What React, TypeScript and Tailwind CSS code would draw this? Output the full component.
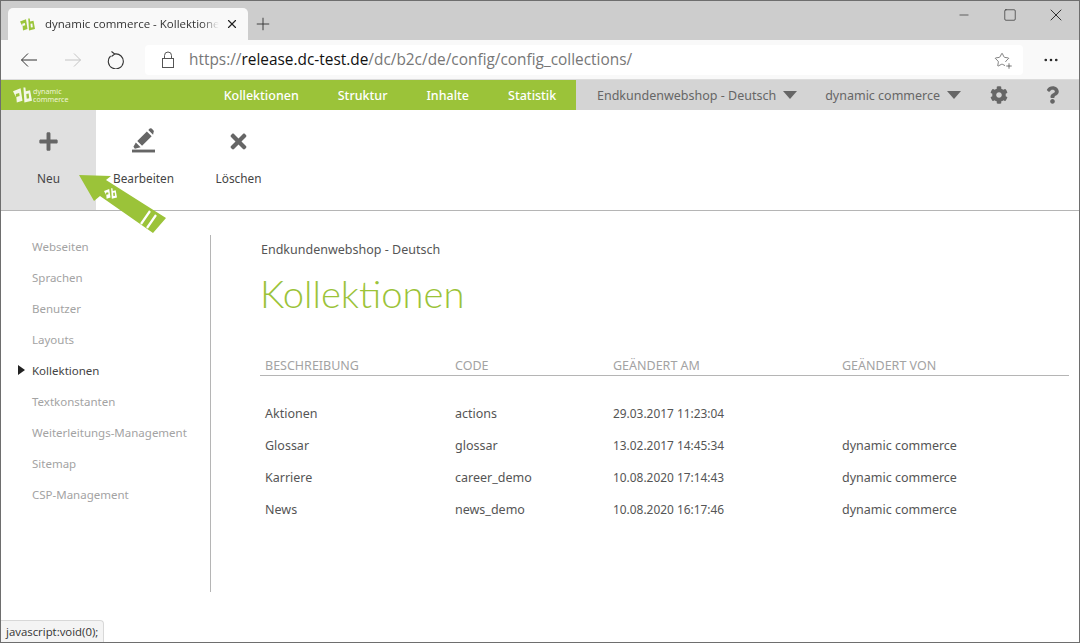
import { Star, Plus, X, Minus, Square, MoreHorizontal } from 'lucide-react';
import { FaPlus, FaTimes, FaCog, FaQuestion } from 'react-icons/fa';

const sidebarItems = [
  'Webseiten',
  'Sprachen',
  'Benutzer',
  'Layouts',
  'Kollektionen',
  'Textkonstanten',
  'Weiterleitungs-Management',
  'Sitemap',
  'CSP-Management',
];

const rows = [
  { name: 'Aktionen', code: 'actions', date: '29.03.2017 11:23:04', by: '' },
  { name: 'Glossar', code: 'glossar', date: '13.02.2017 14:45:34', by: 'dynamic commerce' },
  { name: 'Karriere', code: 'career_demo', date: '10.08.2020 17:14:43', by: 'dynamic commerce' },
  { name: 'News', code: 'news_demo', date: '10.08.2020 16:17:46', by: 'dynamic commerce' },
];

function DcLogo({ className, fill }: { className: string; fill: string }) {
  return (
    <svg viewBox="0 0 20 18" className={className}>
      <path d="M0 5 L8 2 L10 15 L4 17 L3.5 11 L7 10 L6.5 7 L3 8 L3 11 Z" fill={fill} />
      <path d="M11 1 L13 1 L13.5 5 L18 4 L20 15 L12 17 Z M14 8 L14.5 13 L17 12.5 L16.5 7.5 Z" fill={fill} fillRule="evenodd" />
    </svg>
  );
}

function Caret() {
  return <span className="block w-0 h-0 border-x-[7px] border-x-transparent border-t-[8px] border-t-[#666]" />;
}

export default function App() {
  return (
    <div className="relative w-[1080px] h-[643px] overflow-hidden border border-[#6e6e6e] bg-white flex flex-col font-['Noto_Sans',sans-serif] text-[12.5px] text-[#555]">
      {/* Browser tab strip */}
      <div className="h-[39px] shrink-0 bg-[#cdcdcd] flex items-end pl-[7px]">
        <div className="w-[240px] h-[32px] bg-[#f9f9f9] rounded-t-[5px] flex items-center pl-[12px] pr-[9px]">
          <DcLogo className="w-[15px] h-[15px] shrink-0" fill="#9bc53a" />
          <span className="ml-[10px] w-[174px] overflow-hidden whitespace-nowrap font-['Open_Sans',sans-serif] text-[11.5px] text-[#333] [mask-image:linear-gradient(to_right,black_90%,transparent)]">
            dynamic commerce - Kollektionen
          </span>
          <X className="ml-auto w-[14px] h-[14px] text-[#222]" strokeWidth={2} />
        </div>
        <Plus className="ml-[5px] mb-[6px] w-[20px] h-[20px] text-[#333]" strokeWidth={1.1} />
        <div className="ml-auto h-full flex items-start text-[#111]">
          <Minus className="mt-[7px] w-[14px] h-[14px] mr-[32px]" strokeWidth={1} absoluteStrokeWidth />
          <Square className="mt-[7px] w-[14px] h-[14px] mr-[29px]" strokeWidth={1} absoluteStrokeWidth />
          <X className="mt-[4px] w-[20px] h-[20px] mr-[13px]" strokeWidth={1} absoluteStrokeWidth />
        </div>
      </div>

      {/* Browser address bar */}
      <div className="h-[40px] shrink-0 bg-[#f9f9f9] border-b border-[#dcdcdc] flex items-center pl-[19px]">
        <svg viewBox="0 0 18 18" className="w-[18px] h-[18px]" fill="none" stroke="#333" strokeWidth="1">
          <path d="M17 9 H1.5 M8 2.5 L1.5 9 L8 15.5" />
        </svg>
        <svg viewBox="0 0 18 18" className="ml-[26px] w-[18px] h-[18px]" fill="none" stroke="#c4c4c4" strokeWidth="1">
          <path d="M1 9 H16.5 M10 2.5 L16.5 9 L10 15.5" />
        </svg>
        <svg viewBox="0 0 18 18" className="ml-[25px] w-[18px] h-[18px]" fill="none" stroke="#333" strokeWidth="1.1">
          <path d="M7.5 3 A7.5 7.5 0 1 1 3.6 5" />
          <path d="M4.5 0.5 L7.7 3 L4.5 5.5" />
        </svg>
        <div className="ml-[20px] w-[878px] h-[30px] bg-white rounded-[4px] flex items-center pl-[16px] pr-[13px]">
          <svg viewBox="0 0 14 17" className="w-[14px] h-[17px]" fill="none" stroke="#555" strokeWidth="1">
            <rect x="1.5" y="7.5" width="11" height="9" />
            <path d="M3.5 7.5 V4.5 A3.5 3.5 0 0 1 10.5 4.5 V7.5" />
          </svg>
          <span className="ml-[14px] pt-[1px] font-['Open_Sans',sans-serif] text-[15.4px] text-[#777] whitespace-nowrap">
            https://<span className="text-[#111]">release.dc-test.de</span>/dc/b2c/de/config/config_collections/
          </span>
          <div className="relative ml-auto w-[16px] h-[16px]">
            <Star className="w-[16px] h-[16px] text-[#555]" strokeWidth={1.1} />
            <Plus className="absolute right-[-3px] bottom-[-2px] w-[8px] h-[8px] text-[#333] bg-white" strokeWidth={2} />
          </div>
        </div>
        <MoreHorizontal className="ml-[19px] w-[18px] h-[18px] text-[#222]" strokeWidth={1.5} />
      </div>

      {/* App nav */}
      <div className="h-[30px] shrink-0 flex">
        <div className="w-[575px] bg-[#9bc339] flex items-center">
          <DcLogo className="ml-[12px] w-[19px] h-[18px]" fill="#f4f7e8" />
          <div className="ml-[1px] text-[7.2px] leading-[8px] text-[#eef4d8]">
            <div>dynamic</div>
            <div>commerce</div>
          </div>
          <nav className="ml-[155px] flex gap-[39px] text-[12.5px] font-medium text-white pt-[2px]">
            <span>Kollektionen</span>
            <span>Struktur</span>
            <span>Inhalte</span>
            <span>Statistik</span>
          </nav>
        </div>
        <div className="flex-1 bg-[#d4d4d4] flex items-center pl-[21px] text-[#666]">
          <span className="pt-[2px]">Endkundenwebshop - Deutsch</span>
          <span className="ml-[7px]"><Caret /></span>
          <span className="ml-[28px] pt-[2px]">dynamic commerce</span>
          <span className="ml-[7px]"><Caret /></span>
          <FaCog className="ml-[29px] w-[18px] h-[18px] text-[#666]" />
          <FaQuestion className="ml-[38px] w-[13px] h-[20px] text-[#666]" />
        </div>
      </div>

      {/* Action bar */}
      <div className="h-[101px] shrink-0 border-b border-[#b5b5b5] flex text-[11.8px] text-[#444]">
        <div className="w-[95px] bg-[#e0e0e0] flex flex-col items-center pt-[21px]">
          <FaPlus className="w-[21px] h-[21px] text-[#666]" />
          <span className="mt-[18px]">Neu</span>
        </div>
        <div className="w-[95px] flex flex-col items-center pt-[17px]">
          <svg viewBox="0 0 24 26" className="w-[23px] h-[26px]">
            <path d="M5.5 14 L15.5 4 L20.5 9 L10.5 19 Z M1.5 20 L4 15.5 L9 20.5 L3 22 Z M17 2.5 L18.5 1 Q19.5 0.3 20.5 1 L22.5 3 Q23.2 4 22.5 5 L22 7.5 Z" fill="#666" />
            <rect x="0" y="23" width="24" height="3" fill="#666" />
          </svg>
          <span className="mt-[17px]">Bearbeiten</span>
        </div>
        <div className="w-[95px] flex flex-col items-center pt-[20px]">
          <FaTimes className="w-[23px] h-[23px] text-[#666]" />
          <span className="mt-[17px]">Löschen</span>
        </div>
      </div>

      {/* Page */}
      <div className="flex-1 flex pt-[24px]">
        <aside className="w-[210px] h-[357px] shrink-0 border-r border-[#b5b5b5] pl-[31px] text-[11.5px] text-[#a3a3a3]">
          <div className="-mt-[4px]">
            {sidebarItems.map((item) => (
              <div key={item} className={item === 'Kollektionen' ? 'relative h-[31px] flex items-center text-[#444]' : 'h-[31px] flex items-center'}>
                {item === 'Kollektionen' && (
                  <span className="absolute left-[-14px] top-[10px] w-0 h-0 border-y-[5px] border-y-transparent border-l-[7px] border-l-[#222]" />
                )}
                {item}
              </div>
            ))}
          </div>
        </aside>
        <main className="flex-1 pl-[49px] pr-[10px]">
          <div className="ml-[1px] mt-[6px] leading-[18px] text-[#555]">Endkundenwebshop - Deutsch</div>
          <h1 className="mt-[10px] font-['Lato',sans-serif] font-light text-[38.2px] leading-[48px] text-[#9bc339]">Kollektionen</h1>
          <div className="mt-[32px] h-[27px] pt-[8px] border-b border-[#b5b5b5] flex items-center pl-[5px] text-[#a3a3a3]">
            <span className="w-[190px]">BESCHREIBUNG</span>
            <span className="w-[158px]">CODE</span>
            <span className="w-[229px]">GEÄNDERT AM</span>
            <span>GEÄNDERT VON</span>
          </div>
          <div className="mt-[22px] text-[#555]">
            {rows.map((row) => (
              <div key={row.name} className="h-[32px] flex items-center pl-[5px]">
                <span className="w-[190px]">{row.name}</span>
                <span className="w-[158px]">{row.code}</span>
                <span className="w-[229px] text-[11.9px]">{row.date}</span>
                <span>{row.by}</span>
              </div>
            ))}
          </div>
        </main>
      </div>

      {/* Tutorial arrow */}
      <svg viewBox="0 0 95 70" className="absolute left-[74px] top-[164px] w-[95px] h-[70px]">
        <path d="M4 10 L36 11 L31 15 L91 53 L78 68 L25 31 L19 36 Z" fill="#9bc339" />
        <path d="M75 46 L66 59 M81 50 L72 63" stroke="#fff" strokeWidth="2.2" fill="none" />
        <svg x="29" y="22" width="13" height="13" viewBox="0 0 20 18">
          <path d="M0 5 L8 2 L10 15 L4 17 L3.5 11 L7 10 L6.5 7 L3 8 L3 11 Z" fill="#fff" />
          <path d="M11 1 L13 1 L13.5 5 L18 4 L20 15 L12 17 Z M14 8 L14.5 13 L17 12.5 L16.5 7.5 Z" fill="#fff" fillRule="evenodd" />
        </svg>
      </svg>

      {/* Status bubble */}
      <div className="absolute left-0 bottom-0 h-[22px] px-[5px] bg-[#f4f4f4] border-t border-r border-[#d8d8d8] rounded-tr-[4px] flex items-center font-['Open_Sans',sans-serif] text-[11.4px] text-[#333]">
        javascript:void(0);
      </div>
    </div>
  );
}
